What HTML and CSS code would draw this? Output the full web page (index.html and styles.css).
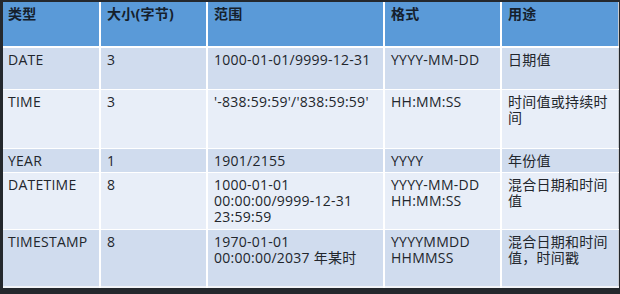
FILE: index.html
```html
<!DOCTYPE html>
<html>
<head>
<meta charset="utf-8">
<link rel="stylesheet" href="styles.css">
</head>
<body>
<div class="screen">
<table class="tbl">
  <colgroup>
    <col class="c1"><col class="c2"><col class="c3"><col class="c4"><col class="c5">
  </colgroup>
  <thead>
    <tr class="head"><th>类型</th><th>大小(字节)</th><th>范围</th><th>格式</th><th>用途</th></tr>
  </thead>
  <tbody>
    <tr class="odd r1"><td>DATE</td><td>3</td><td>1000-01-01/9999-12-31</td><td>YYYY-MM-DD</td><td>日期值</td></tr>
    <tr class="even r2"><td>TIME</td><td>3</td><td>'-838:59:59'/'838:59:59'</td><td>HH:MM:SS</td><td>时间值或持续时<br>间</td></tr>
    <tr class="odd r3"><td>YEAR</td><td>1</td><td>1901/2155</td><td>YYYY</td><td>年份值</td></tr>
    <tr class="even r4"><td>DATETIME</td><td>8</td><td>1000-01-01<br>00:00:00/9999-12-31<br>23:59:59</td><td>YYYY-MM-DD<br>HH:MM:SS</td><td>混合日期和时间<br>值</td></tr>
    <tr class="odd r5"><td>TIMESTAMP</td><td>8</td><td>1970-01-01<br>00:00:00/2037 年某时</td><td>YYYYMMDD<br>HHMMSS</td><td>混合日期和时间<br>值，时间戳</td></tr>
  </tbody>
</table>
</div>
</body>
</html>
```
FILE: styles.css
```css
html, body {
  margin: 0;
  padding: 0;
  background: #24282d;
}
.screen {
  width: 620px;
  height: 294px;
  padding: 2px 0 0 3px;
  box-sizing: border-box;
}
.tbl {
  border-collapse: collapse;
  table-layout: fixed;
  width: 615px;
  font-family: "Open Sans", "Noto Sans CJK SC", sans-serif;
  font-size: 14px;
  line-height: 16px;
  letter-spacing: 0.25px;
  color: #22262c;
  border-right: 1px solid #c9ccd1;
  border-bottom: 2px solid #f2f4f8;
}
.c1 { width: 97px; }
.c2 { width: 107px; }
.c3 { width: 177px; }
.c4 { width: 117px; }
.c5 { width: 117px; }
th, td {
  text-align: left;
  vertical-align: top;
  padding: 4px 4px 0 6px;
  border-left: 2px solid #ffffff;
  white-space: nowrap;
}
th:first-child, td:first-child {
  border-left: none;
  padding-left: 5px;
}
th {
  font-weight: 700;
  background: #5a9ad8;
  color: #15202c;
  padding-top: 4px;
  height: 40px;
  border-bottom: 2px solid #ffffff;
}
td {
  border-top: 1px solid #ffffff;
}
.odd td { background: #d0dcee; }
.even td { background: #e8eef8; }
.r1 td { height: 37px; }
.r2 td { height: 54px; }
.r3 td { height: 19px; }
.r4 td { height: 52px; }
.r5 td { height: 52px; }
```
